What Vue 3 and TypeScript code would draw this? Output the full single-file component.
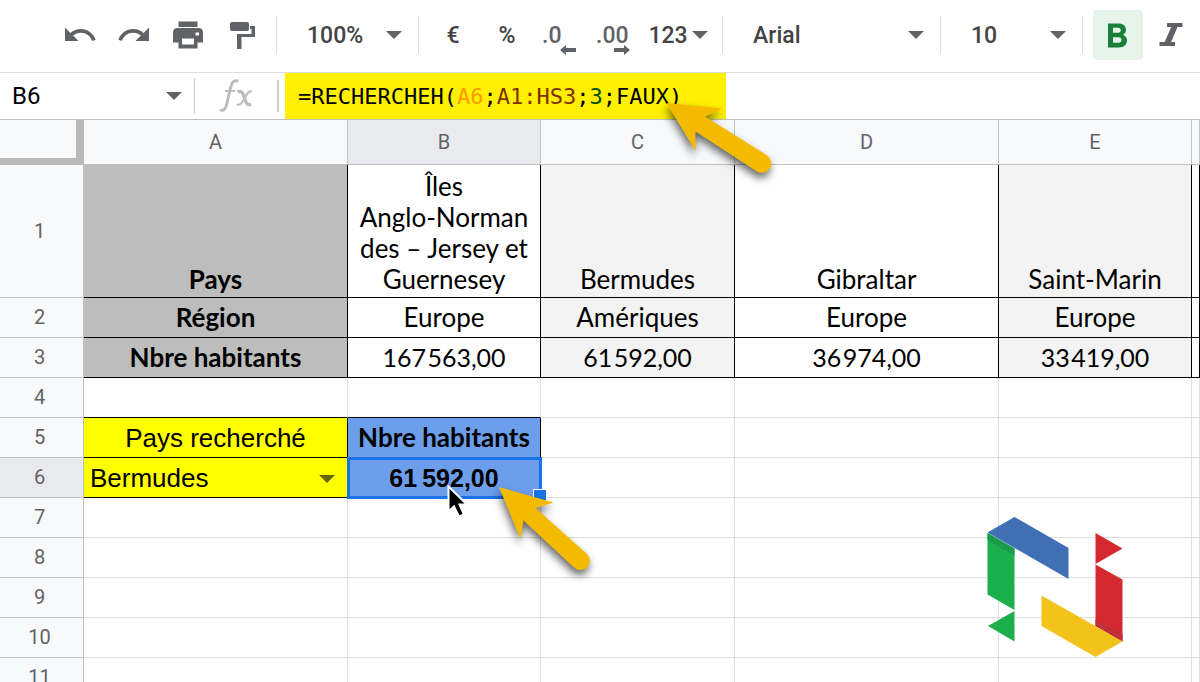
<script setup lang="ts">
import { ref } from 'vue'

interface Cell {
  text: string
  cls?: string
}
interface Row {
  n: number
  cells: Cell[]
}

const columns = ['A', 'B', 'C', 'D', 'E', '']
const cellRef = ref('B6')
const zoom = ref('100%')
const font = ref('Arial')
const size = ref('10')
const country = ref('Bermudes')
const bold = ref(true)

const formula = [
  { t: '=RECHERCHEH(', c: '' },
  { t: 'A6', c: 'orange' },
  { t: ';', c: '' },
  { t: 'A1:HS3', c: 'brown' },
  { t: ';', c: '' },
  { t: '3', c: 'green' },
  { t: ';FAUX)', c: '' },
]

const data = (n: number, texts: string[]): Row => ({
  n,
  cells: texts.map((text, i) => ({
    text,
    cls: [
      'data',
      i === 0 ? 'title' : '',
      i === 2 || i === 4 ? 'alt' : '',
      /^\d/.test(text) ? 'num' : '',
    ].join(' '),
  })),
})
const blank = (n: number): Row => ({ n, cells: columns.map(() => ({ text: '' })) })

const rows: Row[] = [
  data(1, ['Pays', 'Îles\nAnglo-Norman\ndes – Jersey et\nGuernesey', 'Bermudes', 'Gibraltar', 'Saint-Marin', '']),
  data(2, ['Région', 'Europe', 'Amériques', 'Europe', 'Europe', '']),
  data(3, ['Nbre habitants', '167\u200a563,00', '61\u200a592,00', '36\u200a974,00', '33\u200a419,00', '']),
  { n: 4, cells: columns.map((_, i) => ({ text: '', cls: i < 2 ? 'edge' : '' })) },
  {
    n: 5,
    cells: [
      { text: 'Pays recherché', cls: 'yellow' },
      { text: 'Nbre habitants', cls: 'blue' },
      ...columns.slice(2).map(() => ({ text: '' })),
    ],
  },
  {
    n: 6,
    cells: [
      { text: '', cls: 'yellow pick' },
      { text: '61\u202f592,00', cls: 'blue active num' },
      ...columns.slice(2).map(() => ({ text: '' })),
    ],
  },
  ...[7, 8, 9, 10, 11].map(blank),
]
</script>

<template>
  <main class="app">
    <div class="toolbar" role="toolbar" aria-label="Mise en forme">
      <button class="tool" aria-label="Annuler">
        <svg width="36" height="36" viewBox="0 0 24 24"><path d="M12.5 8c-2.65 0-5.05.99-6.9 2.6L2 7v9h9l-3.62-3.62c1.39-1.16 3.16-1.88 5.12-1.88 3.54 0 6.55 2.31 7.6 5.5l2.37-.78C21.08 11.03 17.15 8 12.5 8z" /></svg>
      </button>
      <button class="tool" aria-label="Rétablir">
        <svg width="36" height="36" viewBox="0 0 24 24"><path d="M18.4 10.6C16.55 8.99 14.15 8 11.5 8c-4.65 0-8.58 3.03-9.96 7.22L3.9 16c1.05-3.19 4.05-5.5 7.6-5.5 1.95 0 3.73.72 5.12 1.88L13 16h9V7l-3.6 3.6z" /></svg>
      </button>
      <button class="tool" aria-label="Imprimer">
        <svg width="36" height="36" viewBox="0 0 36 36"><path fill-rule="evenodd" d="M8.500 4.500h19v5.500h-19zM7.500 11h21q4.500 0 4.500 4.500v10h-5.500v6h-19v-6H3v-10q0-4.500 4.500-4.500zM12 21.500v6h12v-6zM25.500 15.500v3h3.500v-3z" /></svg>
      </button>
      <button class="tool" aria-label="Reproduire la mise en forme">
        <svg width="36" height="36" viewBox="0 0 36 36"><path d="M8 5h15q2 0 2 2v5q0 2-2 2H8q-2 0-2-2V7q0-2 2-2zM26 9h5v11H17.500v12H13V17h14.500v-5H26z" /></svg>
      </button>
      <span class="sep gap"></span>
      <div class="drop zoom">
        <select v-model="zoom" aria-label="Zoom"><option>100%</option><option>50%</option></select>
        <svg class="caret" width="16" height="8" viewBox="0 0 16 8"><path d="M0 0h16L8 8z" /></svg>
      </div>
      <span class="sep"></span>
      <button class="tool text after" aria-label="Format monétaire">€</button>
      <button class="tool text" aria-label="Format pourcentage">%</button>
      <button class="tool dec" aria-label="Réduire les décimales">
        <span>.0</span>
        <svg class="mark" width="16" height="10" viewBox="0 0 16 10"><path d="M0 5l6-5v3h10v4H6v3z" /></svg>
      </button>
      <button class="tool dec" aria-label="Ajouter des décimales">
        <span>.00</span>
        <svg class="mark" width="16" height="10" viewBox="0 0 16 10"><path d="M16 5l-6-5v3H0v4h10v3z" /></svg>
      </button>
      <button class="tool formats" aria-label="Autres formats">
        123
        <svg width="16" height="8" viewBox="0 0 16 8"><path d="M0 0h16L8 8z" /></svg>
      </button>
      <span class="sep"></span>
      <div class="drop font">
        <select v-model="font" aria-label="Police"><option>Arial</option><option>Lato</option></select>
        <svg class="caret" width="16" height="8" viewBox="0 0 16 8"><path d="M0 0h16L8 8z" /></svg>
      </div>
      <span class="sep"></span>
      <div class="drop size">
        <select v-model="size" aria-label="Taille"><option>10</option><option>12</option></select>
        <svg class="caret" width="16" height="8" viewBox="0 0 16 8"><path d="M0 0h16L8 8z" /></svg>
      </div>
      <span class="sep"></span>
      <button class="bold" :class="{ on: bold }" aria-label="Gras" @click="bold = !bold">
        <svg width="36" height="36" viewBox="0 0 36 36"><path fill-rule="evenodd" d="M8 6.500h10.500c4.500 0 7.500 2.500 7.500 6.300 0 2.300-1.200 4-3 5 2.400 1 4 3 4 5.700 0 4.200-3.200 7-8 7H8zM13 10.800v5h5c1.800 0 2.800-1 2.800-2.500s-1-2.500-2.800-2.500zM13 20.300v5.500h5.500c2 0 3-1.100 3-2.700s-1-2.800-3-2.800z" /></svg>
      </button>
      <button class="tool" aria-label="Italique">
        <svg width="36" height="36" viewBox="0 0 36 36"><path d="M15 6h15.500v4h-5l-6.400 15H23v4H7.500v-4h5.200l6.500-15H15z" /></svg>
      </button>
    </div>

    <div class="bar">
      <div class="drop name">
        <input v-model="cellRef" aria-label="Zone de nom" />
        <svg class="caret" width="16" height="8" viewBox="0 0 16 8"><path d="M0 0h16L8 8z" /></svg>
      </div>
      <span class="rule"></span>
      <svg class="fx" width="36" height="36" viewBox="0 0 36 36" fill="none" stroke="#bdbdbd" aria-hidden="true">
        <path stroke-width="3" d="M2 31.500q4.500 3 6.500-4.500L13 8Q14.500 1.500 20.500 3" />
        <path stroke-width="2" d="M7 13h10" />
        <path stroke-width="3.400" d="M19.500 14q4-2 5.500 2l3 8q1.500 4 5 2" />
        <path stroke-width="2.200" d="M34 13.500q-3-1-5 2.500l-5 8.500q-2 3-5.500 2" />
      </svg>
      <span class="rule thick"></span>
      <div class="formula" contenteditable="true" role="textbox" aria-label="Formule" spellcheck="false"><span v-for="(p, i) in formula" :key="i" :class="p.c">{{ p.t }}</span></div>
    </div>

    <table class="sheet">
      <colgroup>
        <col class="c-row" /><col class="c-wide" /><col class="c-b" /><col class="c-c" /><col class="c-wide" /><col class="c-b" /><col />
      </colgroup>
      <thead>
        <tr>
          <td class="corner"></td>
          <th v-for="c in columns" :key="c" scope="col" :class="{ current: c === 'B' }">{{ c }}</th>
        </tr>
      </thead>
      <tbody>
        <tr v-for="r in rows" :key="r.n" :class="{ tall: r.n === 1 }">
          <th scope="row" :class="{ current: r.n === 6 }">{{ r.n }}</th>
          <td v-for="(c, i) in r.cells" :key="i" :class="c.cls">
            <div v-if="r.n === 6 && i === 0" class="drop">
              <select v-model="country" aria-label="Pays recherché">
                <option>Bermudes</option><option>Gibraltar</option><option>Saint-Marin</option>
              </select>
              <svg class="caret" width="16" height="8" viewBox="0 0 16 8"><path d="M0 0h16L8 8z" /></svg>
            </div>
            <template v-else>{{ c.text }}</template>
            <span v-if="r.n === 6 && i === 1" class="handle"></span>
          </td>
        </tr>
      </tbody>
    </table>

    <svg class="overlay" width="1200" height="682" viewBox="0 0 1200 682" aria-hidden="true">
      <g class="arrow">
        <path d="M666.500 103L722.500 108.500 705 116.500 766.500 155A9.500 9.500 0 0 1 757 171.500L695.500 131.500V151z" />
        <path d="M499 487L553.500 502.500 535.500 508 587 554A9 9 0 0 1 574 567.500L523.500 520.500 520.500 539z" />
      </g>
      <path class="pointer" d="M448.500 486.500v25l5.500-5 5 10 5-2-4.500-10h7.500z" />
      <g>
        <path fill="#1bb04c" d="M987.500 533l27 15.500v61.500l-27-15.500zM1014.500 611v30.500L988 626z" />
        <path fill="#1b9a4c" d="M987.500 533l27 15.500v7l-27-15.500z" />
        <path fill="#416fb5" d="M987.500 532.500L1014.500 517l54 31v31z" />
        <path fill="#d6282f" d="M1095.500 533l27 15.500-27 15.500zM1095.500 564.500l27 15v62l-27-15.500z" />
        <path fill="#bf3038" d="M1095.500 619l27 15.500v7l-27-15.500z" />
        <path fill="#f3c31b" d="M1041.500 595.500l81 46-27 15.500-54-31z" />
      </g>
    </svg>
  </main>
</template>

<style>
body {
  margin: 0;
  overflow: hidden;
}
</style>

<style scoped>
.app {
  position: relative;
  height: 100vh;
  overflow: hidden;
  background: #fff;
  color: #000;
  font-family: Roboto, sans-serif;
}
button,
select,
input {
  border: 0;
  padding: 0;
  margin: 0;
  background: none;
  color: inherit;
  font: inherit;
  appearance: none;
  outline: 0;
}
svg {
  display: block;
}
.toolbar {
  display: flex;
  align-items: center;
  box-sizing: border-box;
  height: 73px;
  padding: 0 0 2px 53px;
  border-bottom: 1px solid #dadce0;
  color: #444;
  font-size: 23px;
  font-weight: 500;
  white-space: nowrap;
}
.toolbar > * {
  flex-shrink: 0;
}
.tool {
  display: flex;
  align-items: center;
  justify-content: center;
  width: 54px;
  height: 50px;
  fill: #5f6368;
}
.dec {
  display: grid;
  grid-template-rows: 40px;
  align-content: center;
  align-items: center;
  justify-content: start;
  padding-left: 8px;
  color: #5f6368;
}
.dec span,
.dec .mark {
  grid-area: 1 / 1;
}
.dec span {
  justify-self: start;
}
.dec .mark {
  align-self: end;
  margin-left: 18px;
}
.formats {
  width: 64px;
  gap: 4px;
  margin-right: 12px;
  margin-left: 4px;
}
.sep {
  width: 1px;
  height: 38px;
  background: #dadce0;
}
.sep.gap,
.after {
  margin-left: 7px;
}
.drop {
  display: grid;
  align-items: center;
}
.drop > select,
.drop > input {
  grid-area: 1 / 1;
  width: 100%;
  min-width: 0;
  box-sizing: border-box;
  padding-left: 30px;
}
.caret {
  grid-area: 1 / 1;
  justify-self: end;
  margin-right: 16px;
  fill: #5f6368;
  pointer-events: none;
}
.zoom,
.size {
  width: 141px;
}
.font {
  width: 217px;
}
.bold {
  display: grid;
  place-items: center;
  width: 50px;
  height: 50px;
  margin-left: 10px;
  border-radius: 4px;
  fill: #5f6368;
}
.bold.on {
  background: #e6f4ea;
  fill: #188038;
}
.bar {
  display: flex;
  align-items: center;
  box-sizing: border-box;
  height: 47px;
  border-bottom: 1px solid #c0c0c0;
}
.name {
  width: 194px;
  font-size: 24px;
}
.name > input {
  padding-left: 12px;
}
.name .caret {
  margin-right: 12px;
}
.rule {
  width: 1px;
  height: 36px;
  background: #c9cbce;
}
.rule.thick {
  width: 2px;
  height: 32px;
}
.fx {
  margin: 0 23px;
}
.formula {
  align-self: stretch;
  box-sizing: border-box;
  width: 441px;
  margin-left: 6px;
  padding-left: 13px;
  background: #fff000;
  font: 22px/47px "DejaVu Sans Mono", monospace;
  white-space: nowrap;
  outline: 0;
}
.orange {
  color: #ff9900;
}
.brown {
  color: #7f3000;
}
.green {
  color: #005000;
}
.sheet {
  width: 100%;
  table-layout: fixed;
  border-collapse: separate;
  border-spacing: 0;
}
.c-row {
  width: 84px;
}
.c-wide {
  width: 264px;
}
.c-b {
  width: 193px;
}
.c-c {
  width: 194px;
}
th,
td {
  box-sizing: border-box;
  height: 40px;
  padding: 0;
  border: solid #dddede;
  border-width: 0 1px 1px 0;
  font: 26px/31px Lato, sans-serif;
  text-align: center;
}
th {
  border-color: #c0c0c0;
  background: #f8f9fa;
  color: #5f6368;
  font: 20px/31px Roboto, sans-serif;
}
thead th {
  height: 45px;
}
th.current {
  background: #e8eaed;
}
tbody th {
  padding-right: 4px;
}
.corner {
  height: 45px;
  border: solid #b9b9b9;
  border-width: 0 8px 7px 0;
  background: #f8f9fa;
}
.tall > * {
  height: 133px;
}
.data {
  border-color: #000;
  white-space: pre-line;
}
.tall .data {
  padding-bottom: 2px;
  vertical-align: bottom;
}
.alt {
  background: #f3f3f3;
}
.title {
  background: #bdbdbd;
  font-weight: 700;
}
.edge {
  border-bottom-color: #000;
}
.yellow {
  padding-top: 2px;
  border-color: #000;
  background: #ff0;
  font-family: "Liberation Sans", Arial, sans-serif;
}
.pick select {
  padding-left: 6px;
}
.pick .caret {
  margin-right: 12px;
  fill: #666600;
}
.blue {
  border-color: #000;
  background: #6d9eeb;
  font-weight: 700;
}
.active {
  position: relative;
  padding-top: 2px;
  font-family: "Liberation Sans", Arial, sans-serif;
  outline: 3px solid #1a73e8;
  outline-offset: -2px;
}
.num {
  font-size: 25px;
}
.handle {
  position: absolute;
  right: -7px;
  bottom: -3px;
  width: 12px;
  height: 10px;
  border: 1px solid #fff;
  border-bottom: 0;
  background: #1a73e8;
}
.overlay {
  position: absolute;
  top: 0;
  left: 0;
  pointer-events: none;
}
.arrow {
  fill: #f3ba00;
  filter: drop-shadow(-1px 5px 4px rgba(0, 0, 0, 0.6));
}
.pointer {
  fill: #000;
  stroke: #fff;
  stroke-width: 2;
}
</style>
